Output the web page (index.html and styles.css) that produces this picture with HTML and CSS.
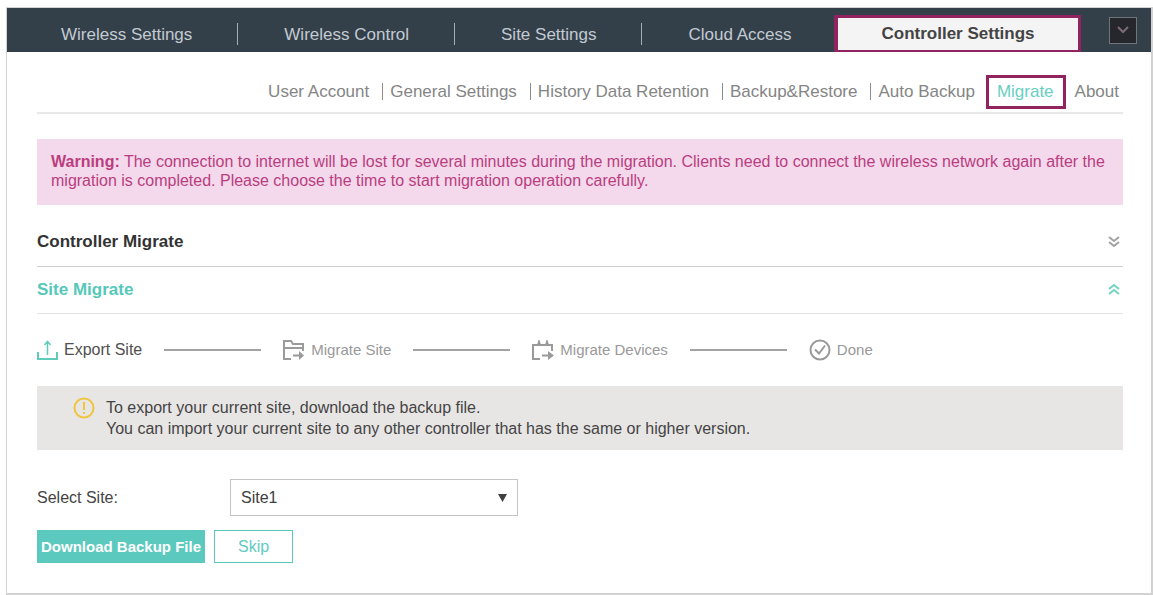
FILE: index.html
```html
<!DOCTYPE html>
<html lang="en">
<head>
<meta charset="utf-8">
<meta name="viewport" content="width=device-width, initial-scale=1">
<title>Controller Settings - Migrate</title>
<link rel="stylesheet" href="styles.css">
</head>
<body>
<div class="panel">
  <header class="topbar">
    <nav class="tabs" aria-label="Main">
      <a class="tab" href="#">Wireless Settings</a>
      <a class="tab" href="#">Wireless Control</a>
      <a class="tab" href="#">Site Settings</a>
      <a class="tab" href="#">Cloud Access</a>
      <a class="tab tab-active" href="#" aria-current="page">Controller Settings</a>
    </nav>
    <button class="collapse" type="button" aria-label="Collapse">
      <svg width="12" height="8" viewBox="0 0 12 8"><path d="M1 1l5 5 5-5" fill="none" stroke="#7d6c76" stroke-width="2"/></svg>
    </button>
  </header>

  <main class="content">
    <nav class="subnav" aria-label="Controller settings">
      <a class="sublink" href="#">User Account</a>
      <a class="sublink divided" href="#">General Settings</a>
      <a class="sublink divided" href="#">History Data Retention</a>
      <a class="sublink divided" href="#">Backup&amp;Restore</a>
      <a class="sublink divided" href="#">Auto Backup</a>
      <a class="sublink sublink-active" href="#" aria-current="page">Migrate</a>
      <a class="sublink sublink-last" href="#">About</a>
    </nav>

    <p class="warning"><strong>Warning:</strong> The connection to internet will be lost for several minutes during the migration. Clients need to connect the wireless network again after the migration is completed. Please choose the time to start migration operation carefully.</p>

    <h2 class="section">
      <span>Controller Migrate</span>
      <svg width="12" height="12" viewBox="0 0 12 12" fill="none" stroke="#a3a3a3" stroke-width="2"><path d="M1 1l5 4 5-4M1 6l5 4 5-4"/></svg>
    </h2>
    <h2 class="section section-open">
      <span>Site Migrate</span>
      <svg width="12" height="12" viewBox="0 0 12 12" fill="none" stroke="#74d3c1" stroke-width="2"><path d="M1 5l5-4 5 4M1 10l5-4 5 4"/></svg>
    </h2>

    <ol class="steps">
      <li class="step step-current">
        <svg width="21" height="20" viewBox="0 0 21 20" fill="none" stroke="#5fcbbd" stroke-width="2"><path d="M1 12v7h19v-7"/><path d="M10.500 15V2M7.500 5l3-3.500 3 3.500" stroke-width="1.500"/></svg>
        <span>Export Site</span>
      </li>
      <li class="line" aria-hidden="true"></li>
      <li class="step">
        <svg width="22" height="20" viewBox="0 0 22 20" fill="none" stroke="#9a9a9a" stroke-width="2"><path d="M8 19H1V1h7l2 3h10v7M1 8h19M10 15.500h9"/><path d="M16 11l5 4.500-5 4.500z" fill="#9a9a9a" stroke="none"/></svg>
        <span>Migrate Site</span>
      </li>
      <li class="line" aria-hidden="true"></li>
      <li class="step">
        <svg width="22" height="20" viewBox="0 0 22 20" fill="none" stroke="#9a9a9a" stroke-width="2"><path d="M8 19H1V5h19v6M10 15.500h9"/><path d="M5 5l1.500-5h1L9 5zM13 5l1.500-5h1L17 5zM16 11l6 4.500-6 4.500z" fill="#9a9a9a" stroke="none"/></svg>
        <span>Migrate Devices</span>
      </li>
      <li class="line" aria-hidden="true"></li>
      <li class="step">
        <svg width="22" height="22" viewBox="0 0 22 22" fill="none" stroke="#9a9a9a" stroke-width="2"><circle cx="11" cy="11" r="9.500"/><path d="M6 10.500l4 4 6-8"/></svg>
        <span>Done</span>
      </li>
    </ol>

    <div class="notice">
      <svg width="22" height="22" viewBox="0 0 22 22" fill="none" stroke="#efc542" stroke-width="2"><circle cx="11" cy="11" r="9.500"/><path d="M11 5v8M11 15v2"/></svg>
      <p>To export your current site, download the backup file.<br>You can import your current site to any other controller that has the same or higher version.</p>
    </div>

    <form class="form">
      <div class="field">
        <label for="site">Select Site:</label>
        <div class="select-wrap">
          <select id="site"><option>Site1</option></select>
          <svg class="arrow" width="9" height="8" viewBox="0 0 9 8"><path d="M0 0h9L4.500 8z" fill="#404040"/></svg>
        </div>
      </div>
      <div class="actions">
        <button class="btn btn-primary" type="button">Download Backup File</button>
        <button class="btn btn-outline" type="button">Skip</button>
      </div>
    </form>
  </main>
</div>
</body>
</html>
```
FILE: styles.css
```css
* {
  box-sizing: border-box;
}

body {
  margin: 0;
  padding: 7px 0 0 6px;
  background: #fff;
  color: #444;
  font: 16px/20px "Liberation Sans", Arial, sans-serif;
}

a {
  color: inherit;
  text-decoration: none;
}

svg {
  flex: none;
}

.panel {
  border: solid #d2d2d2;
  border-width: 1px 2px 2px 1px;
  min-height: calc(100vh - 7px);
}

.topbar {
  display: flex;
  align-items: center;
  justify-content: space-between;
  height: 44px;
  padding-right: 14px;
  background: #33404a;
}

.tabs {
  display: flex;
  align-items: flex-end;
  align-self: stretch;
  color: #c3cad2;
  font-size: 17px;
}

.tab {
  position: relative;
  padding: 0 46px;
  line-height: 34px;
  white-space: nowrap;
}

.tab:first-child {
  padding-left: 54px;
}

.tab:nth-child(4) {
  padding-right: 43px;
}

.tab:nth-child(-n+3)::after {
  content: "";
  position: absolute;
  right: 0;
  top: 5px;
  width: 1px;
  height: 22px;
  background: #a4adb5;
}

.tab-active {
  padding: 0 43px;
  border: solid #912460;
  border-width: 3px 3px 2px 4px;
  background: #f4f4f4;
  color: #444;
  font-weight: bold;
  line-height: 32px;
}

.collapse {
  display: grid;
  place-items: center;
  width: 28px;
  height: 27px;
  padding: 0;
  border: 1px solid #70757b;
  background: #26262d;
}

.content {
  padding: 23px 28px 28px 30px;
}

.subnav {
  display: flex;
  justify-content: flex-end;
  align-items: center;
  padding: 0 4px 3px;
  border-bottom: 2px solid #e8e8e8;
  color: #858585;
  font-size: 17px;
  line-height: 28px;
  white-space: nowrap;
}

.divided::before {
  content: "";
  display: inline-block;
  width: 1px;
  height: 17px;
  margin: 0 7px 0 13px;
  background: #8b8b8b;
  vertical-align: -3px;
}

.sublink-active {
  margin-left: 11px;
  padding: 0 9px 0 8px;
  border: 3px solid #912460;
  color: #68cfc2;
}

.sublink-last {
  margin-left: 9px;
}

.warning {
  margin: 25px 0 12px;
  padding: 13px 14px 15px;
  background: #f3d9eb;
  color: #bb3d80;
  line-height: 19px;
}

.section {
  display: flex;
  align-items: center;
  justify-content: space-between;
  height: 47px;
  margin: 0;
  padding-right: 3px;
  border-bottom: 1px solid #e3e3e3;
  color: #333;
  font-size: 17px;
  line-height: 20px;
}

.warning + .section {
  height: 50px;
  border-color: #cfcfcf;
}

.section-open {
  color: #55c8ba;
}

.steps {
  display: flex;
  align-items: center;
  margin: 24px 0;
  padding: 0;
  color: #999;
  font-size: 15px;
  list-style: none;
}

.step {
  display: flex;
  align-items: center;
  gap: 6px;
  height: 24px;
  white-space: nowrap;
}

.step-current {
  color: #505050;
  font-size: 16px;
}

.line {
  width: 97px;
  height: 2px;
  margin: 0 22px;
  background: #a3a3a3;
}

.notice {
  display: flex;
  align-items: flex-start;
  gap: 11px;
  padding: 11px 36px;
  background: #e8e6e5;
}

.notice p {
  margin: 0;
  line-height: 21px;
}

.form {
  margin-top: 29px;
}

.field {
  display: flex;
  align-items: center;
}

.field label {
  width: 193px;
}

.select-wrap {
  display: flex;
  align-items: center;
  position: relative;
  width: 288px;
}

.field select {
  width: 100%;
  height: 37px;
  padding: 0 10px;
  appearance: none;
  border: 1px solid #c4c4c4;
  border-radius: 0;
  background: #fff;
  color: #404040;
  font: inherit;
}

.arrow {
  position: absolute;
  right: 11px;
  pointer-events: none;
}

.actions {
  display: flex;
  gap: 9px;
  margin-top: 14px;
}

.btn {
  height: 33px;
  padding: 0 3px;
  border: 1px solid #5bc9be;
  font: 16px/20px "Liberation Sans", Arial, sans-serif;
}

.btn-primary {
  background: #5bc9be;
  color: #fff;
  font-size: 15px;
  font-weight: bold;
}

.btn-outline {
  width: 79px;
  background: #fff;
  color: #62cbbf;
}
```
